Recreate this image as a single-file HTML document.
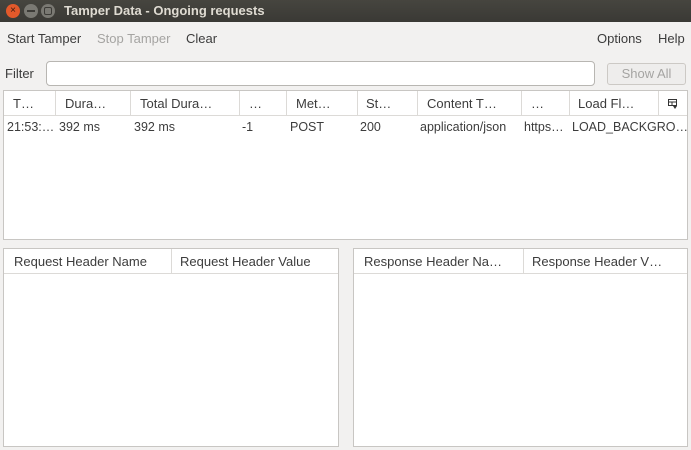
<!DOCTYPE html>
<html><head><style>
*{margin:0;padding:0;box-sizing:border-box}
body{width:691px;height:450px;background:#f2f1f0;font-family:"Liberation Sans",sans-serif;font-size:13px;color:#3c3c3c;position:relative;overflow:hidden}
.a{position:absolute;white-space:nowrap}
.title{left:0;top:0;width:691px;height:22px;background:linear-gradient(#46453f,#3a3935)}
.btn{width:14px;height:14px;border-radius:50%;top:4px}
.panel{background:#fff;border:1px solid #c8c6c3}
.hdr{background:#fff;border-bottom:1px solid #dcdad7;height:25px}
.sep{width:1px;background:#dcdad7;height:25px;top:0}
.h{top:5px}
.r{top:29px;font-size:12.5px}
</style></head><body>
<div class="a title"></div>
<div class="a btn" style="left:6px;background:#e2592b;color:#3a1a10;font-size:10px;text-align:center;line-height:14px">×</div>
<div class="a btn" style="left:24px;background:#7a7973"><div style="margin:6px 3px;height:2px;background:#3c3b37"></div></div>
<div class="a btn" style="left:41px;background:#7a7973"><div style="margin:3px;height:8px;border:1.5px solid #3c3b37;border-radius:2px"></div></div>
<div class="a" style="left:64px;top:3px;color:#dfdbd2;font-weight:bold;font-size:13px">Tamper Data - Ongoing requests</div>
<div class="a" style="left:7px;top:31px">Start Tamper</div>
<div class="a" style="left:97px;top:31px;color:#a5a4a2">Stop Tamper</div>
<div class="a" style="left:186px;top:31px">Clear</div>
<div class="a" style="left:597px;top:31px">Options</div>
<div class="a" style="left:658px;top:31px">Help</div>
<div class="a" style="left:5px;top:66px">Filter</div>
<div class="a" style="left:46px;top:61px;width:549px;height:25px;background:#fff;border:1px solid #b8b6b2;border-radius:4px"></div>
<div class="a" style="left:607px;top:63px;width:79px;height:22px;border:1px solid #ccc9c5;border-radius:3px;background:#eeedec;color:#a5a4a2;text-align:center;line-height:20px">Show All</div>
<div class="a panel" style="left:3px;top:90px;width:685px;height:150px">
<div class="a hdr" style="left:0;top:0;width:683px"></div>
<div class="a sep" style="left:51px"></div><div class="a sep" style="left:126px"></div><div class="a sep" style="left:235px"></div><div class="a sep" style="left:282px"></div><div class="a sep" style="left:353px"></div><div class="a sep" style="left:413px"></div><div class="a sep" style="left:517px"></div><div class="a sep" style="left:565px"></div><div class="a sep" style="left:654px"></div>
<div class="a h" style="left:9px">T…</div><div class="a h" style="left:61px">Dura…</div><div class="a h" style="left:136px">Total Dura…</div><div class="a h" style="left:245px">…</div><div class="a h" style="left:292px">Met…</div><div class="a h" style="left:362px">St…</div><div class="a h" style="left:423px">Content T…</div><div class="a h" style="left:527px">…</div><div class="a h" style="left:574px">Load Fl…</div>
<svg class="a" style="left:664px;top:8px" width="10" height="10" viewBox="0 0 10 10"><rect x="0.5" y="0.5" width="8" height="6" fill="none" stroke="#333"/><line x1="0" y1="3" x2="9" y2="3" stroke="#333"/><line x1="4" y1="3" x2="4" y2="7" stroke="#333"/><path d="M5 7h4l-2 3z" fill="#333"/></svg>
<div class="a r" style="left:3px">21:53:…</div><div class="a r" style="left:55px">392 ms</div><div class="a r" style="left:130px">392 ms</div><div class="a r" style="left:238px">-1</div><div class="a r" style="left:286px">POST</div><div class="a r" style="left:356px">200</div><div class="a r" style="left:416px">application/json</div><div class="a r" style="left:520px">https…</div><div class="a r" style="left:568px">LOAD_BACKGRO…</div>
</div>
<div class="a panel" style="left:3px;top:248px;width:336px;height:199px">
<div class="a hdr" style="left:0;top:0;width:334px"></div><div class="a sep" style="left:167px"></div>
<div class="a h" style="left:10px">Request Header Name</div><div class="a h" style="left:176px">Request Header Value</div>
</div>
<div class="a panel" style="left:353px;top:248px;width:335px;height:199px">
<div class="a hdr" style="left:0;top:0;width:333px"></div><div class="a sep" style="left:169px"></div>
<div class="a h" style="left:10px">Response Header Na…</div><div class="a h" style="left:178px">Response Header V…</div>
</div>
</body></html>
